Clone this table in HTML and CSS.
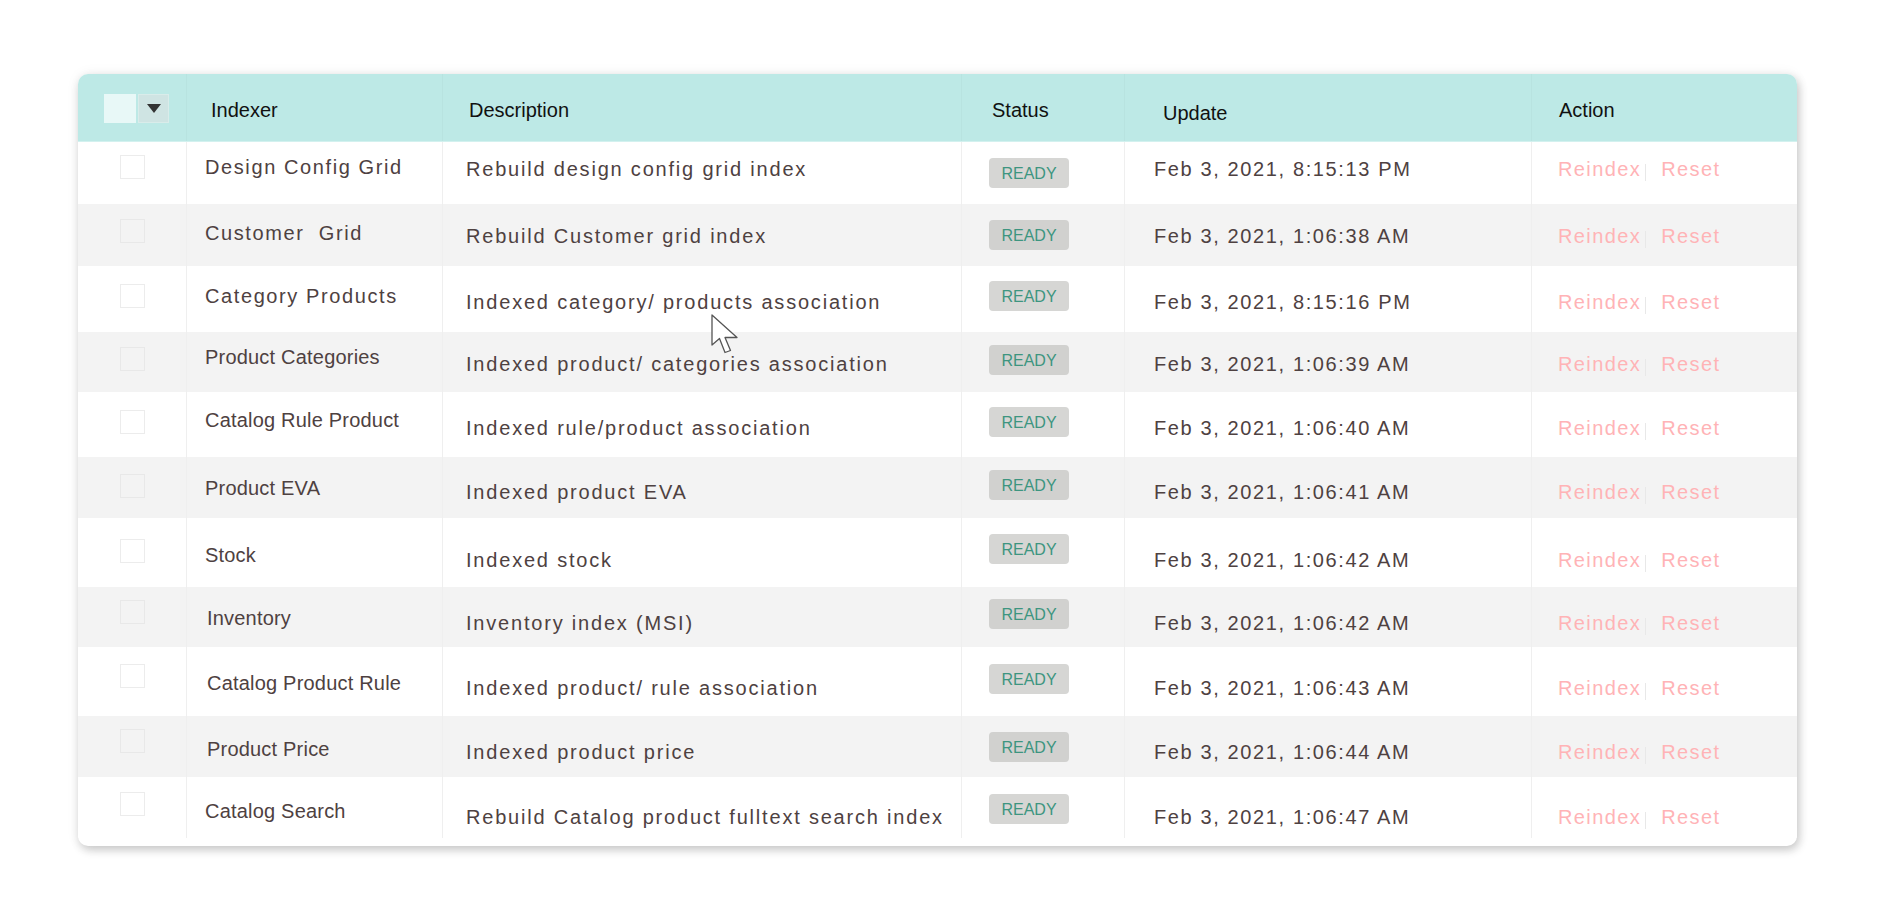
FILE: index.html
```html
<!DOCTYPE html>
<html lang="en">
<head>
<meta charset="utf-8">
<title>Index Management</title>
<link rel="stylesheet" href="styles.css">
</head>
<body>
<div class="page">
  <div class="card">
    <div class="row head">
      <div class="cell c-check">
        <span class="hbox"></span>
        <span class="hdrop"><svg width="14" height="9" viewBox="0 0 14 9"><polygon points="0,0 14,0 7,9" fill="#333"/></svg></span>
      </div>
      <div class="cell c-name">Indexer</div>
      <div class="cell c-desc">Description</div>
      <div class="cell c-status">Status</div>
      <div class="cell c-date h-update">Update</div>
      <div class="cell c-action">Action</div>
    </div>

    <div class="row r1">
      <div class="cell c-check"><span class="box"></span></div>
      <div class="cell c-name sp">Design Config Grid</div>
      <div class="cell c-desc">Rebuild design config grid index</div>
      <div class="cell c-status"><span class="badge">READY</span></div>
      <div class="cell c-date">Feb 3, 2021, 8:15:13 PM</div>
      <div class="cell c-action"><span class="link">Reindex</span><span class="sep"></span><span class="link">Reset</span></div>
    </div>

    <div class="row r2 alt">
      <div class="cell c-check"><span class="box"></span></div>
      <div class="cell c-name sp">Customer&nbsp; Grid</div>
      <div class="cell c-desc">Rebuild Customer grid index</div>
      <div class="cell c-status"><span class="badge">READY</span></div>
      <div class="cell c-date">Feb 3, 2021, 1:06:38 AM</div>
      <div class="cell c-action"><span class="link">Reindex</span><span class="sep"></span><span class="link">Reset</span></div>
    </div>

    <div class="row r3">
      <div class="cell c-check"><span class="box"></span></div>
      <div class="cell c-name sp">Category Products</div>
      <div class="cell c-desc">Indexed category/ products association</div>
      <div class="cell c-status"><span class="badge">READY</span></div>
      <div class="cell c-date">Feb 3, 2021, 8:15:16 PM</div>
      <div class="cell c-action"><span class="link">Reindex</span><span class="sep"></span><span class="link">Reset</span></div>
    </div>

    <div class="row r4 alt">
      <div class="cell c-check"><span class="box"></span></div>
      <div class="cell c-name">Product Categories</div>
      <div class="cell c-desc">Indexed product/ categories association</div>
      <div class="cell c-status"><span class="badge">READY</span></div>
      <div class="cell c-date">Feb 3, 2021, 1:06:39 AM</div>
      <div class="cell c-action"><span class="link">Reindex</span><span class="sep"></span><span class="link">Reset</span></div>
    </div>

    <div class="row r5">
      <div class="cell c-check"><span class="box"></span></div>
      <div class="cell c-name">Catalog Rule Product</div>
      <div class="cell c-desc">Indexed rule/product association</div>
      <div class="cell c-status"><span class="badge">READY</span></div>
      <div class="cell c-date">Feb 3, 2021, 1:06:40 AM</div>
      <div class="cell c-action"><span class="link">Reindex</span><span class="sep"></span><span class="link">Reset</span></div>
    </div>

    <div class="row r6 alt">
      <div class="cell c-check"><span class="box"></span></div>
      <div class="cell c-name">Product EVA</div>
      <div class="cell c-desc">Indexed product EVA</div>
      <div class="cell c-status"><span class="badge">READY</span></div>
      <div class="cell c-date">Feb 3, 2021, 1:06:41 AM</div>
      <div class="cell c-action"><span class="link">Reindex</span><span class="sep"></span><span class="link">Reset</span></div>
    </div>

    <div class="row r7">
      <div class="cell c-check"><span class="box"></span></div>
      <div class="cell c-name">Stock</div>
      <div class="cell c-desc">Indexed stock</div>
      <div class="cell c-status"><span class="badge">READY</span></div>
      <div class="cell c-date">Feb 3, 2021, 1:06:42 AM</div>
      <div class="cell c-action"><span class="link">Reindex</span><span class="sep"></span><span class="link">Reset</span></div>
    </div>

    <div class="row r8 alt">
      <div class="cell c-check"><span class="box"></span></div>
      <div class="cell c-name shift">Inventory</div>
      <div class="cell c-desc">Inventory index (MSI)</div>
      <div class="cell c-status"><span class="badge">READY</span></div>
      <div class="cell c-date">Feb 3, 2021, 1:06:42 AM</div>
      <div class="cell c-action"><span class="link">Reindex</span><span class="sep"></span><span class="link">Reset</span></div>
    </div>

    <div class="row r9">
      <div class="cell c-check"><span class="box"></span></div>
      <div class="cell c-name shift">Catalog Product Rule</div>
      <div class="cell c-desc">Indexed product/ rule association</div>
      <div class="cell c-status"><span class="badge">READY</span></div>
      <div class="cell c-date">Feb 3, 2021, 1:06:43 AM</div>
      <div class="cell c-action"><span class="link">Reindex</span><span class="sep"></span><span class="link">Reset</span></div>
    </div>

    <div class="row r10 alt">
      <div class="cell c-check"><span class="box"></span></div>
      <div class="cell c-name shift">Product Price</div>
      <div class="cell c-desc">Indexed product price</div>
      <div class="cell c-status"><span class="badge">READY</span></div>
      <div class="cell c-date">Feb 3, 2021, 1:06:44 AM</div>
      <div class="cell c-action"><span class="link">Reindex</span><span class="sep"></span><span class="link">Reset</span></div>
    </div>

    <div class="row r11">
      <div class="cell c-check"><span class="box"></span></div>
      <div class="cell c-name">Catalog Search</div>
      <div class="cell c-desc">Rebuild Catalog product fulltext search index</div>
      <div class="cell c-status"><span class="badge">READY</span></div>
      <div class="cell c-date">Feb 3, 2021, 1:06:47 AM</div>
      <div class="cell c-action"><span class="link">Reindex</span><span class="sep"></span><span class="link">Reset</span></div>
    </div>
  </div>

  <svg class="cursor" width="32" height="42" viewBox="0 0 32 42">
    <polygon points="1,1 1,31 8.5,24.5 14,38.5 19.5,36.5 14,23.5 26,23.5" fill="#ffffff" stroke="#555" stroke-width="1.3" stroke-linejoin="round"/>
  </svg>
</div>
</body>
</html>
```

FILE: styles.css
```css
html, body {
  margin: 0;
  padding: 0;
  background: #ffffff;
}

body {
  font-family: "Liberation Sans", Arial, Helvetica, sans-serif;
  color: #4e4141;
}

.page {
  position: relative;
  padding: 74px 0 60px 78px;
}

.card {
  width: 1719px;
  background: #ffffff;
  border-radius: 10px;
  overflow: hidden;
  padding-bottom: 8px;
  box-shadow: 2px 4px 10px rgba(0, 0, 0, 0.2), 0 0 14px rgba(0, 0, 0, 0.06);
}

.row {
  display: grid;
  grid-template-columns: 108px 256px 519px 163px 407px 266px;
  height: var(--h);
  background: #ffffff;
}

.row.alt {
  background: #f3f3f3;
}

.cell {
  font-size: 20px;
  line-height: 20px;
  white-space: nowrap;
  padding-top: calc(var(--b) - 17px);
  box-sizing: border-box;
}

.cell + .cell {
  border-left: 1px solid #efefef;
}

/* header */
.row.head {
  --h: 68px;
  --b: 43px;
  --bi: 43px;
  background: #bde9e6;
  border-bottom: 1px solid #d3f1ef;
  box-sizing: border-box;
  color: #111111;
}

.row.head .cell {
  letter-spacing: 0;
}

.row.head .cell + .cell {
  border-left: 1px solid rgba(0, 0, 0, 0.025);
}

.row.head .c-check {
  display: flex;
  padding: 20px 0 0 26px;
}

.hbox {
  width: 32px;
  height: 29px;
  background: #e8f8f7;
  margin-right: 2px;
}

.hdrop {
  width: 31px;
  height: 29px;
  background: #cfe4e3;
  border: 1px solid #d9ecea;
  box-sizing: border-box;
  display: flex;
  align-items: center;
  justify-content: center;
}

.row.head .c-name { padding-left: 24px; }
.row.head .c-desc { padding-left: 26px; }
.row.head .c-status { padding-left: 30px; padding-top: 26px; }
.row.head .c-date { padding-left: 38px; }
.row.head .h-update { padding-top: 29px; }
.row.head .c-action { padding-left: 27px; }

/* body cells */
.c-check {
  padding: var(--c) 0 0 42px;
}

.box {
  display: block;
  width: 25px;
  height: 24px;
  border: 1px solid #ececec;
  box-sizing: border-box;
  background: #ffffff;
}

.alt .box {
  background: #f3f3f3;
  border-color: #e8e8e8;
}

.c-name {
  padding-left: 18px;
  padding-top: calc(var(--bi) - 17px);
  letter-spacing: 0.2px;
}

.c-name.sp {
  letter-spacing: 1.6px;
}

.c-name.shift {
  padding-left: 20px;
}

.c-desc {
  padding-left: 23px;
  letter-spacing: 1.8px;
}

.c-status {
  padding: var(--s) 0 0 27px;
}

.badge {
  display: inline-block;
  width: 80px;
  height: 30px;
  box-sizing: border-box;
  padding-top: 2px;
  line-height: 28px;
  text-align: center;
  font-size: 16px;
  letter-spacing: 0;
  color: #3d9580;
  background: #d6d6d4;
  border-radius: 4px;
}

.alt .badge {
  background: #d1d1cf;
}

.c-date {
  padding-left: 29px;
  letter-spacing: 1.62px;
}

.c-action {
  padding-left: 26px;
  letter-spacing: 1.4px;
}

.link {
  color: #ffb3b6;
}

.sep {
  display: inline-block;
  width: 1px;
  height: 17px;
  background: #e8e8e8;
  margin: 0 15px 0 4px;
  vertical-align: -5px;
}

/* per-row measurements */
.r1  { --h: 62px; --c: 13px; --bi: 32px; --s: 16px; --b: 34px; }
.r2  { --h: 62px; --c: 15px; --bi: 36px; --s: 16px; --b: 39px; }
.r3  { --h: 66px; --c: 18px; --bi: 37px; --s: 15px; --b: 43px; }
.r4  { --h: 60px; --c: 15px; --bi: 32px; --s: 13px; --b: 39px; }
.r5  { --h: 65px; --c: 18px; --bi: 35px; --s: 15px; --b: 43px; }
.r6  { --h: 61px; --c: 17px; --bi: 38px; --s: 13px; --b: 42px; }
.r7  { --h: 69px; --c: 21px; --bi: 44px; --s: 16px; --b: 49px; }
.r8  { --h: 60px; --c: 13px; --bi: 38px; --s: 12px; --b: 43px; }
.r9  { --h: 69px; --c: 17px; --bi: 43px; --s: 17px; --b: 48px; }
.r10 { --h: 61px; --c: 13px; --bi: 40px; --s: 16px; --b: 43px; }
.r11 { --h: 61px; --c: 15px; --bi: 41px; --s: 17px; --b: 47px; }

.cursor {
  position: absolute;
  left: 711px;
  top: 314px;
}
```
